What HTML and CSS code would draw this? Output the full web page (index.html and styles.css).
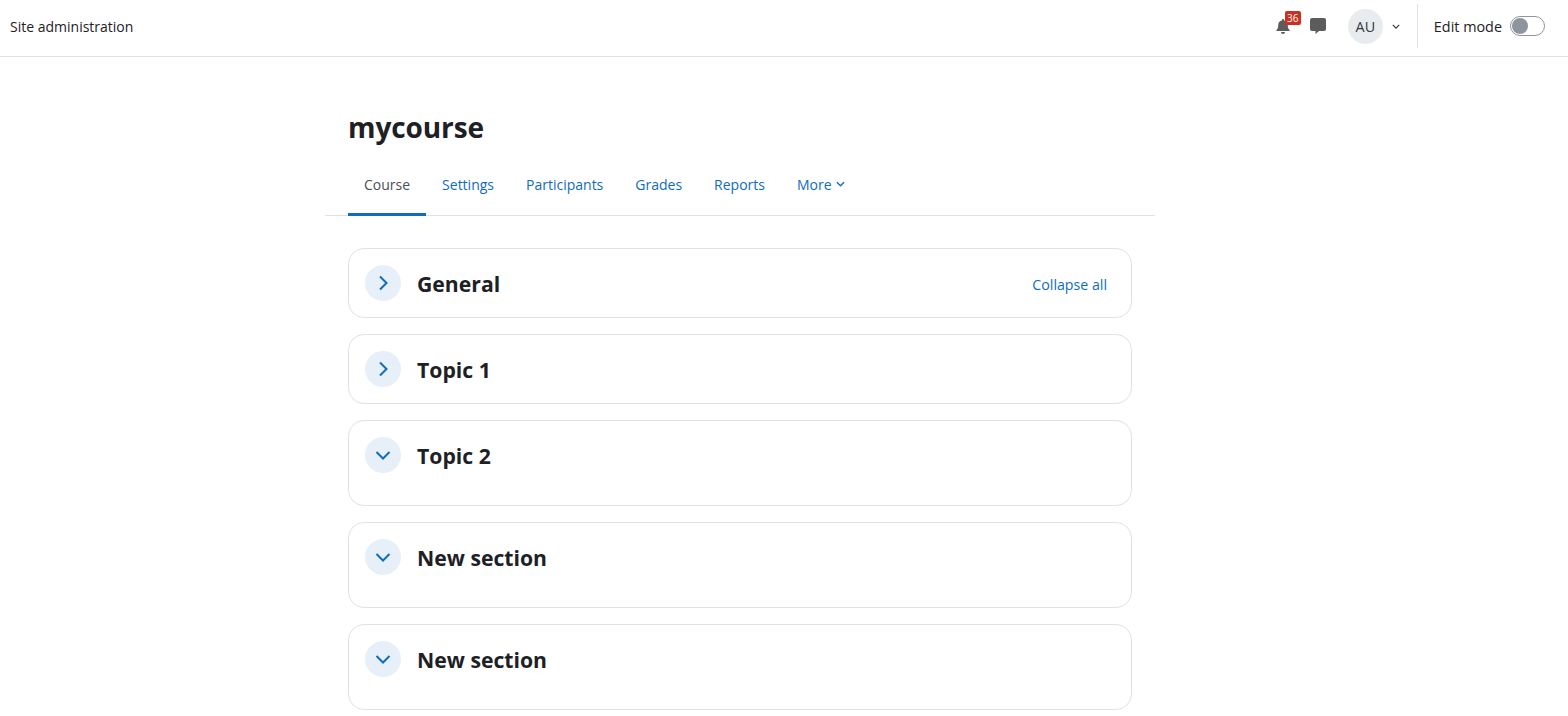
FILE: index.html
```html
<!DOCTYPE html>
<html lang="en">
<head>
<meta charset="utf-8">
<title>mycourse</title>
<link rel="stylesheet" href="styles.css">
</head>
<body>
<header class="navbar">
  <a class="site-link" href="#">Site administration</a>
  <div class="nav-right">
    <div class="bell">
      <svg class="icon-bell" viewBox="0 0 16 16" width="16" height="16"><path d="M8 16a2 2 0 0 0 2-2H6a2 2 0 0 0 2 2zM8 1a1.1 1.1 0 0 0-1.1 1.1v.5A4.8 4.8 0 0 0 3.2 7.3c0 2.7-.8 3.8-1.7 4.8-.3.4-.1 1 .5 1h12c.6 0 .8-.6.5-1-.9-1-1.700-2.100-1.700-4.800A4.800 4.800 0 0 0 9.100 2.600v-.5A1.100 1.100 0 0 0 8 1z"/></svg>
      <span class="badge">36</span>
    </div>
    <svg class="icon-chat" viewBox="0 0 16 16" width="16" height="16"><path d="M2 0h12a2 2 0 0 1 2 2v9a2 2 0 0 1-2 2H9l-3.500 3v-3H2a2 2 0 0 1-2-2V2a2 2 0 0 1 2-2z"/></svg>
    <div class="user">
      <span class="avatar">AU</span>
      <svg class="caret" viewBox="0 0 10 6" width="8" height="5"><path d="M1 1l4 4 4-4"/></svg>
    </div>
    <div class="edit">
      <span class="edit-label">Edit mode</span>
      <span class="switch"><span class="knob"></span></span>
    </div>
  </div>
</header>
<main class="page">
  <h1 class="title">mycourse</h1>
  <nav class="tabs">
    <a class="tab active" href="#">Course</a>
    <a class="tab" href="#">Settings</a>
    <a class="tab" href="#">Participants</a>
    <a class="tab" href="#">Grades</a>
    <a class="tab" href="#">Reports</a>
    <a class="tab" href="#">More <svg class="tab-caret" viewBox="0 0 10 6" width="9" height="6"><path d="M1 1l4 4 4-4"/></svg></a>
  </nav>
  <section class="sections">
    <article class="card">
      <span class="toggle"><svg viewBox="0 0 12 16" width="12" height="16"><path d="M3 1.500l6.500 6.500L3 14.500"/></svg></span>
      <h2 class="card-title">General</h2>
      <a class="collapse" href="#">Collapse all</a>
    </article>
    <article class="card">
      <span class="toggle"><svg viewBox="0 0 12 16" width="12" height="16"><path d="M3 1.500l6.500 6.500L3 14.500"/></svg></span>
      <h2 class="card-title">Topic 1</h2>
    </article>
    <article class="card open">
      <span class="toggle"><svg viewBox="0 0 16 12" width="16" height="12"><path d="M1.500 3l6.500 6.500L14.500 3"/></svg></span>
      <h2 class="card-title">Topic 2</h2>
    </article>
    <article class="card open">
      <span class="toggle"><svg viewBox="0 0 16 12" width="16" height="12"><path d="M1.500 3l6.500 6.500L14.500 3"/></svg></span>
      <h2 class="card-title">New section</h2>
    </article>
    <article class="card open">
      <span class="toggle"><svg viewBox="0 0 16 12" width="16" height="12"><path d="M1.500 3l6.500 6.500L14.500 3"/></svg></span>
      <h2 class="card-title">New section</h2>
    </article>
  </section>
</main>
</body>
</html>
```
FILE: styles.css
```css
* { box-sizing: border-box; }
html, body { margin: 0; height: 716px; overflow: hidden; }
body { background: #fff; color: #1d2125; font-family: "Open Sans", "Noto Sans", sans-serif; font-size: 14px; }
a { text-decoration: none; color: #0f6cbf; }
.navbar { height: 57px; border-bottom: 1px solid #dee2e6; display: flex; align-items: center; justify-content: space-between; padding: 0 23px 4px 10px; }
.site-link { color: #1d2125; font-size: 14px; }
.nav-right { display: flex; align-items: center; height: 100%; }
.bell { position: relative; width: 16px; height: 16px; margin-right: 19px; }
.icon-bell { fill: #5c5c5c; display: block; }
.badge { position: absolute; left: 10px; top: -7px; width: 16px; height: 14px; background: #ca3120; color: #fff; font-size: 10px; line-height: 14px; text-align: center; border-radius: 2px; }
.icon-chat { fill: #5c5c5c; margin-right: 22px; }
.user { display: flex; align-items: center; gap: 9px; padding-right: 17px; }
.avatar { width: 35px; height: 35px; border-radius: 50%; background: #e9ecef; display: flex; align-items: center; justify-content: center; font-size: 14.4px; color: #343a40; }
.caret { fill: none; stroke: #343a40; stroke-width: 1.500; }
.edit { display: flex; align-items: center; gap: 8px; height: 44px; padding-left: 16px; border-left: 1px solid #dee2e6; }
.edit-label { font-size: 14.4px; }
.switch { display: block; width: 35px; height: 20px; border: 1px solid #8f959e; border-radius: 10px; padding: 1px; }
.knob { display: block; width: 16px; height: 16px; border-radius: 50%; background: #8f959e; }
.page { width: 830px; margin-left: 325px; }
.title { margin: 0; padding: 54px 23px 0; font-size: 28px; line-height: 32px; font-weight: 700; letter-spacing: -0.1px; }
.tabs { display: flex; margin-top: 16px; border-bottom: 1px solid #dee2e6; padding: 0 23px; height: 57px; }
.tab { padding: 0 16px 4px; display: flex; align-items: center; gap: 4px; font-size: 14px; height: 57px; border-bottom: 3px solid transparent; }
.tab.active { color: #495057; border-bottom-color: #0f6cbf; }
.tab-caret { fill: none; stroke: #0f6cbf; stroke-width: 1.500; }
.sections { margin: 32px 23px 0; display: flex; flex-direction: column; gap: 16px; }
.card { display: flex; align-items: flex-start; height: 70px; border: 1px solid #dee2e6; border-radius: 16px; padding: 16px 24px 0 16px; }
.card.open { height: 86px; }
.toggle { width: 36px; height: 36px; border-radius: 50%; background: #e7f0f9; display: flex; align-items: center; justify-content: center; flex: none; }
.toggle svg { fill: none; stroke: #0f6cbf; stroke-width: 2; display: block; }
.card-title { margin: 0 0 0 16px; font-size: 21.2px; line-height: 38px; font-weight: 700; }
.collapse { margin-left: auto; font-size: 14.2px; line-height: 39px; }
```
